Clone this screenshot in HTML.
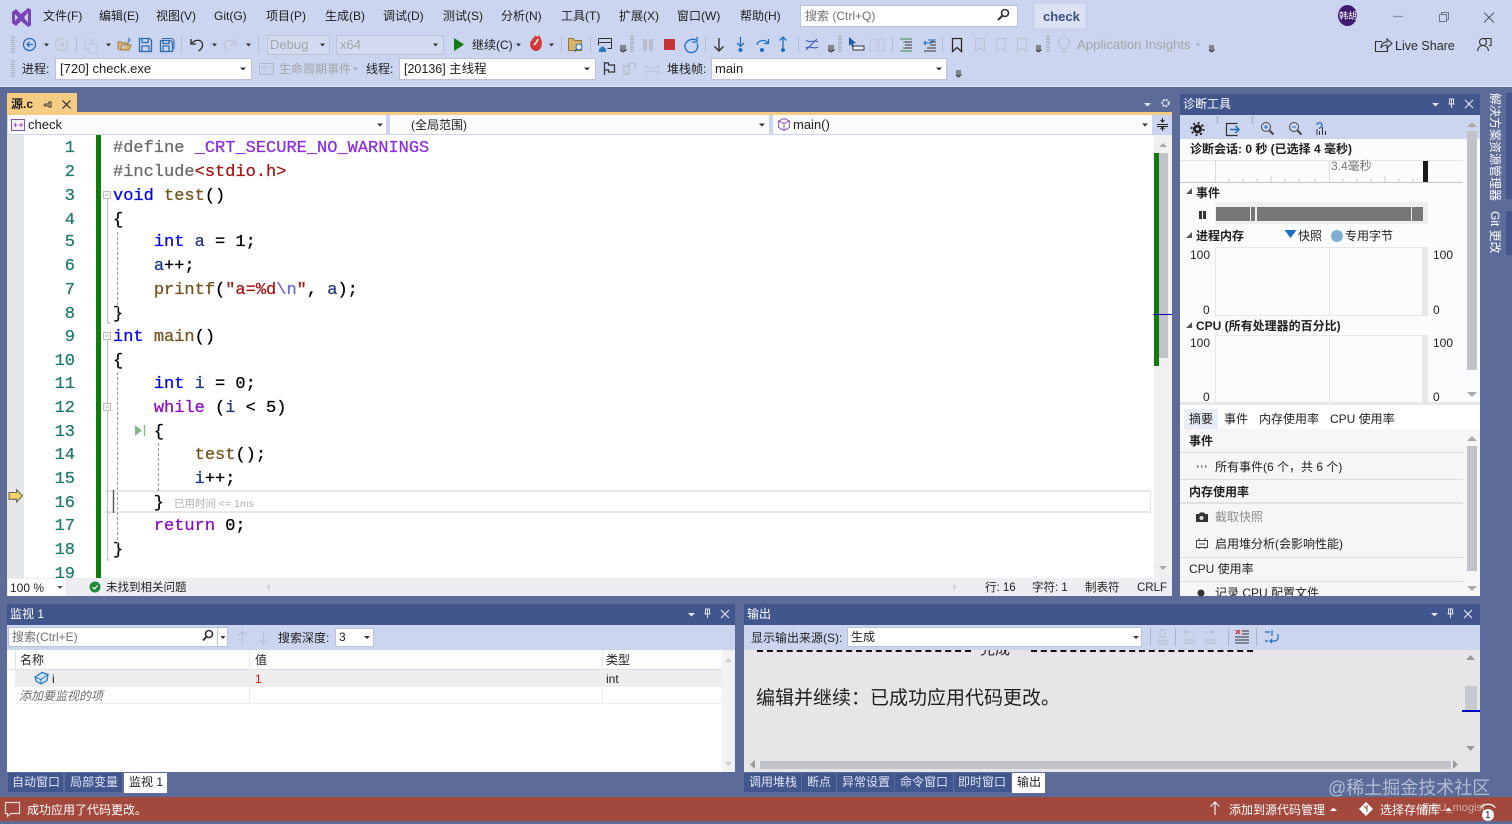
<!DOCTYPE html>
<html lang="zh"><head><meta charset="utf-8"><title>check</title>
<style>
html,body{margin:0;padding:0}
body{width:1512px;height:821px;overflow:hidden;position:relative;background:#5d6b99;font-family:"Liberation Sans","Noto Sans CJK SC",sans-serif;font-size:12px;color:#1e1e1e}
.b{position:absolute}
.t{position:absolute;white-space:nowrap;line-height:16px;height:16px}
.w{color:#fff}
.g{color:#a2a4a5}
.bd{font-weight:bold}
.c{position:absolute;white-space:pre;font-family:"Liberation Mono","DejaVu Sans Mono",monospace;font-size:17px;line-height:24px;height:24px;color:#000;-webkit-text-stroke:.25px currentColor}
.n{color:#1f7a6b;width:28px;text-align:right;left:47px}
.k{color:#0000ff}.p{color:#8f08c4}.f{color:#74531f}.v{color:#1f377f}.s{color:#a31515}.m{color:#8a2be2}.h{color:#6a6a6a}.e{color:#6a6acb}
.cb{position:absolute;background:#fff;border:1px solid #bcc3d8;box-sizing:border-box}
svg{position:absolute;left:0;top:0;z-index:5;pointer-events:none}
</style></head><body>

<!-- top chrome -->
<div class="b" style="left:0;top:0;width:1512px;height:86px;background:#ccd5f0"></div>
<div class="b" style="left:0;top:86px;width:1512px;height:1px;background:#dfe5f5"></div>
<div class="t" style="left:43px;top:8px">文件(F)</div>
<div class="t" style="left:99px;top:8px">编辑(E)</div>
<div class="t" style="left:156px;top:8px">视图(V)</div>
<div class="t" style="left:214px;top:8px">Git(G)</div>
<div class="t" style="left:266px;top:8px">项目(P)</div>
<div class="t" style="left:325px;top:8px">生成(B)</div>
<div class="t" style="left:383px;top:8px">调试(D)</div>
<div class="t" style="left:443px;top:8px">测试(S)</div>
<div class="t" style="left:501px;top:8px">分析(N)</div>
<div class="t" style="left:561px;top:8px">工具(T)</div>
<div class="t" style="left:619px;top:8px">扩展(X)</div>
<div class="t" style="left:677px;top:8px">窗口(W)</div>
<div class="t" style="left:740px;top:8px">帮助(H)</div>
<div class="cb" style="left:800px;top:5px;width:218px;height:22px"></div>
<div class="t" style="left:805px;top:8px;color:#717171">搜索 (Ctrl+Q)</div>
<div class="b" style="left:1035px;top:4px;width:50px;height:24px;background:#dbe2f5"></div>
<div class="t bd" style="left:1043px;top:9px;font-size:13px;color:#3b4f81">check</div>
<div class="b" style="left:1338px;top:5px;width:19px;height:21px;border-radius:50%;background:#3f1a6e"></div>
<div class="t w" style="left:1339px;top:8px;font-size:9px;width:18px;overflow:hidden">韩胡</div>

<div class="cb" style="left:267px;top:35px;width:63px;height:20px;background:#d3dbf1"></div>
<div class="t g" style="left:270px;top:37px;font-size:13px">Debug</div>
<div class="cb" style="left:336px;top:35px;width:108px;height:20px;background:#d3dbf1"></div>
<div class="t g" style="left:340px;top:37px;font-size:13px">x64</div>
<div class="t" style="left:472px;top:37px">继续(C)</div>
<div class="t g" style="left:1077px;top:37px;font-size:13.2px">Application Insights</div>
<div class="t" style="left:1395px;top:38px;font-size:12.5px;color:#2a2a2a">Live Share</div>

<div class="t" style="left:22px;top:61px">进程:</div>
<div class="cb" style="left:55px;top:58px;width:197px;height:22px"></div>
<div class="t" style="left:60px;top:61px;font-size:13px">[720] check.exe</div>
<div class="t g" style="left:279px;top:61px">生命周期事件</div>
<div class="t" style="left:366px;top:61px">线程:</div>
<div class="cb" style="left:399px;top:58px;width:197px;height:22px"></div>
<div class="t" style="left:404px;top:61px;font-size:12.5px">[20136] 主线程</div>
<div class="t" style="left:667px;top:61px">堆栈帧:</div>
<div class="cb" style="left:711px;top:58px;width:236px;height:22px"></div>
<div class="t" style="left:715px;top:61px;font-size:13px">main</div>

<!-- document tab -->
<div class="b" style="left:7px;top:93px;width:70px;height:20px;background:#f5cc84"></div>
<div class="b" style="left:7px;top:112px;width:1165px;height:3px;background:#f5cc84"></div>
<div class="t bd" style="left:11px;top:96px">源.c</div>

<!-- nav bar -->
<div class="b" style="left:7px;top:115px;width:1165px;height:20px;background:#ccd5f0"></div>
<div class="b" style="left:8px;top:115px;width:378px;height:19px;background:#fcfcfd"></div>
<div class="b" style="left:390px;top:115px;width:379px;height:19px;background:#fcfcfd"></div>
<div class="b" style="left:773px;top:115px;width:379px;height:19px;background:#fcfcfd"></div>
<div class="t" style="left:28px;top:117px;font-size:13px">check</div>
<div class="t" style="left:411px;top:117px">(全局范围)</div>
<div class="t" style="left:793px;top:117px;font-size:13px">main()</div>

<!-- editor -->
<div class="b" style="left:7px;top:135px;width:1147px;height:443px;background:#fff;overflow:hidden">
<div class="b" style="left:0;top:0;width:17px;height:443px;background:#e6e7e8"></div>
<div class="b" style="left:89px;top:0;width:5px;height:443px;background:#107c10"></div>
<div class="b" style="left:98px;top:355px;width:1046px;height:23px;border:1px solid #e6e6e6;border-width:2px 1px 2px 0;box-sizing:border-box"></div>
</div>
<div class="c n" style="top:137px">1</div><div class="c n" style="top:161px">2</div><div class="c n" style="top:185px">3</div><div class="c n" style="top:209px">4</div><div class="c n" style="top:231px">5</div><div class="c n" style="top:255px">6</div><div class="c n" style="top:279px">7</div><div class="c n" style="top:303px">8</div><div class="c n" style="top:326px">9</div><div class="c n" style="top:350px">10</div><div class="c n" style="top:373px">11</div><div class="c n" style="top:397px">12</div><div class="c n" style="top:421px">13</div><div class="c n" style="top:444px">14</div><div class="c n" style="top:468px">15</div><div class="c n" style="top:492px">16</div><div class="c n" style="top:515px">17</div><div class="c n" style="top:539px">18</div><div class="b" style="left:0;top:563px;width:100px;height:15px;overflow:hidden"><div class="c n" style="top:0">19</div></div>

<div class="c" style="left:113px;top:137px"><span class="h">#define</span> <span class="m">_CRT_SECURE_NO_WARNINGS</span></div>
<div class="c" style="left:113px;top:161px"><span class="h">#include</span><span class="s">&lt;stdio.h&gt;</span></div>
<div class="c" style="left:113px;top:185px"><span class="k">void</span> <span class="f">test</span>()</div>
<div class="c" style="left:113px;top:209px">{</div>
<div class="c" style="left:113px;top:231px">    <span class="k">int</span> <span class="v">a</span> = 1;</div>
<div class="c" style="left:113px;top:255px">    <span class="v">a</span>++;</div>
<div class="c" style="left:113px;top:279px">    <span class="f">printf</span>(<span class="s">"a=%d</span><span class="e">\n</span><span class="s">"</span>, <span class="v">a</span>);</div>
<div class="c" style="left:113px;top:303px">}</div>
<div class="c" style="left:113px;top:326px"><span class="k">int</span> <span class="f">main</span>()</div>
<div class="c" style="left:113px;top:350px">{</div>
<div class="c" style="left:113px;top:373px">    <span class="k">int</span> <span class="v">i</span> = 0;</div>
<div class="c" style="left:113px;top:397px">    <span class="p">while</span> (<span class="v">i</span> &lt; 5)</div>
<div class="c" style="left:113px;top:421px">    {</div>
<div class="c" style="left:113px;top:444px">        <span class="f">test</span>();</div>
<div class="c" style="left:113px;top:468px">        <span class="v">i</span>++;</div>
<div class="c" style="left:113px;top:492px">    }</div>
<div class="t" style="left:174px;top:496px;font-size:10.5px;color:#b0b0b0">已用时间 &lt;= 1ms</div>
<div class="c" style="left:113px;top:515px">    <span class="p">return</span> 0;</div>
<div class="c" style="left:113px;top:539px">}</div>

<!-- editor scrollbar -->
<div class="b" style="left:1154px;top:135px;width:18px;height:443px;background:#f0f0f2"></div>
<div class="b" style="left:1159px;top:153px;width:9px;height:205px;background:#c2c3c9"></div>
<div class="b" style="left:1154px;top:153px;width:5px;height:213px;background:#107c10"></div>
<div class="b" style="left:1153px;top:314px;width:19px;height:1px;background:#0000c0;z-index:3"></div>

<!-- editor status -->
<div class="b" style="left:7px;top:578px;width:1165px;height:18px;background:#eeeef2"></div>
<div class="b" style="left:8px;top:579px;width:57px;height:17px;background:#fff"></div>
<div class="t" style="left:10px;top:580px">100 %</div>
<div class="t" style="left:106px;top:580px;font-size:11.5px">未找到相关问题</div>
<div class="t" style="left:985px;top:580px;font-size:11.5px">行: 16</div>
<div class="t" style="left:1032px;top:580px;font-size:11.5px">字符: 1</div>
<div class="t" style="left:1085px;top:580px;font-size:11.5px">制表符</div>
<div class="t" style="left:1137px;top:580px;font-size:11.5px">CRLF</div>

<!-- diagnostics -->
<div class="b" style="left:1180px;top:94px;width:300px;height:21px;background:#40568d"></div>
<div class="t w" style="left:1183px;top:96px">诊断工具</div>
<div class="b" style="left:1180px;top:115px;width:300px;height:24px;background:#ccd5f0"></div>
<div class="b" style="left:1180px;top:139px;width:300px;height:266px;background:#fbfcfd"></div>
<div class="t bd" style="left:1190px;top:141px;font-size:12px">诊断会话: 0 秒 (已选择 4 毫秒)</div>
<div class="b" style="left:1180px;top:160px;width:283px;height:1px;background:#e4e4e4"></div>
<div class="b" style="left:1180px;top:182px;width:283px;height:1px;background:#c8c8c8"></div>
<div class="b" style="left:1215px;top:161px;width:1px;height:21px;background:#ddd"></div>
<div class="b" style="left:1329px;top:161px;width:1px;height:21px;background:#ddd"></div>
<div class="b" style="left:1423px;top:161px;width:5px;height:21px;background:#1c1c1c"></div>
<div class="t" style="left:1331px;top:158px;color:#777">3.4毫秒</div>
<div class="t bd" style="left:1196px;top:185px">事件</div>
<div class="b" style="left:1215px;top:202px;width:213px;height:22px;background:#eee"></div>
<div class="b" style="left:1216px;top:207px;width:207px;height:14px;background:#777"></div>
<div class="b" style="left:1250px;top:207px;width:1px;height:14px;background:#eee"></div>
<div class="b" style="left:1255px;top:207px;width:2px;height:14px;background:#eee"></div>
<div class="b" style="left:1411px;top:207px;width:1px;height:14px;background:#eee"></div>
<div class="t bd" style="left:1196px;top:228px">进程内存</div>
<div class="t" style="left:1298px;top:228px">快照</div>
<div class="t" style="left:1345px;top:228px">专用字节</div>
<div class="b" style="left:1215px;top:247px;width:208px;height:69px;border:1px solid #e6e6e6;box-sizing:border-box;background:#fcfcfd"></div>
<div class="b" style="left:1329px;top:247px;width:1px;height:69px;background:#e2e2e2"></div>
<div class="b" style="left:1423px;top:247px;width:5px;height:69px;background:#e8e8e8"></div>
<div class="t" style="left:1190px;top:247px">100</div><div class="t" style="left:1433px;top:247px">100</div>
<div class="t" style="left:1203px;top:302px">0</div><div class="t" style="left:1433px;top:302px">0</div>
<div class="t bd" style="left:1196px;top:318px">CPU (所有处理器的百分比)</div>
<div class="b" style="left:1215px;top:335px;width:208px;height:68px;border:1px solid #e6e6e6;box-sizing:border-box;background:#fcfcfd"></div>
<div class="b" style="left:1329px;top:335px;width:1px;height:68px;background:#e2e2e2"></div>
<div class="b" style="left:1423px;top:335px;width:5px;height:68px;background:#e8e8e8"></div>
<div class="t" style="left:1190px;top:335px">100</div><div class="t" style="left:1433px;top:335px">100</div>
<div class="t" style="left:1203px;top:389px">0</div><div class="t" style="left:1433px;top:389px">0</div>
<div class="b" style="left:1180px;top:402px;width:300px;height:3px;background:#e8e8e8"></div>
<div class="b" style="left:1467px;top:131px;width:10px;height:239px;background:#c2c3c9"></div>

<div class="b" style="left:1180px;top:405px;width:300px;height:24px;background:#fff"></div>
<div class="b" style="left:1184px;top:409px;width:34px;height:20px;background:#e8edf8"></div>
<div class="t" style="left:1189px;top:411px">摘要</div><div class="t" style="left:1224px;top:411px">事件</div><div class="t" style="left:1259px;top:411px">内存使用率</div><div class="t" style="left:1330px;top:411px">CPU 使用率</div>
<div class="b" style="left:1180px;top:429px;width:300px;height:167px;background:#f6f6f6;overflow:hidden">
<div class="b" style="left:0;top:23px;width:283px;height:1px;background:#ddd"></div>
<div class="b" style="left:0;top:50px;width:283px;height:1px;background:#ddd"></div>
<div class="b" style="left:0;top:73px;width:283px;height:2px;background:#e2e2e2"></div>
<div class="b" style="left:0;top:128px;width:283px;height:1px;background:#ddd"></div>
<div class="b" style="left:0;top:152px;width:283px;height:1px;background:#ddd"></div>
<div class="t" style="left:35px;top:156px">记录 CPU 配置文件</div>
</div>
<div class="t bd" style="left:1189px;top:433px">事件</div>
<div class="t" style="left:1215px;top:459px">所有事件(6 个，共 6 个)</div>
<div class="t bd" style="left:1189px;top:484px">内存使用率</div>
<div class="t" style="left:1215px;top:509px;color:#8e8e8e">截取快照</div>
<div class="t" style="left:1215px;top:536px">启用堆分析(会影响性能)</div>
<div class="t" style="left:1189px;top:561px">CPU 使用率</div>
<div class="b" style="left:1467px;top:446px;width:10px;height:125px;background:#c2c3c9"></div>

<!-- right side tabs -->
<div class="b" style="left:1506px;top:93px;width:6px;height:106px;background:#40568d"></div>
<div class="b" style="left:1506px;top:211px;width:6px;height:44px;background:#40568d"></div>
<div class="b w" style="left:1488px;top:93px;writing-mode:vertical-rl;text-orientation:sideways;white-space:nowrap;line-height:14px;font-size:12px">解决方案资源管理器</div>
<div class="b w" style="left:1488px;top:211px;writing-mode:vertical-rl;text-orientation:sideways;white-space:nowrap;line-height:14px;font-size:12px">Git 更改</div>

<!-- watch panel -->
<div class="b" style="left:7px;top:604px;width:728px;height:21px;background:#40568d"></div>
<div class="t w" style="left:10px;top:606px">监视 1</div>
<div class="b" style="left:7px;top:625px;width:728px;height:25px;background:#ccd5f0"></div>
<div class="cb" style="left:8px;top:627px;width:210px;height:20px"></div>
<div class="cb" style="left:217px;top:627px;width:11px;height:20px"></div>
<div class="t" style="left:12px;top:629px;color:#717171">搜索(Ctrl+E)</div>
<div class="t" style="left:278px;top:630px">搜索深度:</div>
<div class="cb" style="left:335px;top:628px;width:39px;height:19px"></div>
<div class="t" style="left:339px;top:629px">3</div>
<div class="b" style="left:7px;top:650px;width:728px;height:122px;background:#fff"></div>
<div class="b" style="left:7px;top:650px;width:715px;height:19px;background:#fdfdfe;border-bottom:1px solid #dcdfeb;box-sizing:content-box"></div>
<div class="b" style="left:15px;top:650px;width:1px;height:19px;background:#dcdfeb"></div>
<div class="b" style="left:249px;top:650px;width:1px;height:53px;background:#e8e8ee"></div>
<div class="b" style="left:602px;top:650px;width:1px;height:53px;background:#e8e8ee"></div>
<div class="t" style="left:20px;top:652px">名称</div><div class="t" style="left:255px;top:652px">值</div><div class="t" style="left:606px;top:652px">类型</div>
<div class="b" style="left:15px;top:670px;width:707px;height:17px;background:#eeeeee"></div>
<div class="b" style="left:15px;top:703px;width:707px;height:1px;background:#eee"></div>
<div class="t" style="left:52px;top:671px">i</div>
<div class="t" style="left:255px;top:671px;color:#e51400">1</div>
<div class="t" style="left:606px;top:671px">int</div>
<div class="t" style="left:19px;top:688px;font-style:italic;color:#6d6d6d">添加要监视的项</div>
<div class="b" style="left:722px;top:650px;width:13px;height:122px;background:#f3f3f4"></div>
<div class="b" style="left:8px;top:773px;width:55px;height:19px;background:#40568d"></div>
<div class="b" style="left:65px;top:773px;width:57px;height:19px;background:#40568d"></div>
<div class="b" style="left:124px;top:773px;width:43px;height:20px;background:#fff"></div>
<div class="t" style="left:12px;top:774px;color:#dfe4f3">自动窗口</div>
<div class="t" style="left:70px;top:774px;color:#dfe4f3">局部变量</div>
<div class="t" style="left:129px;top:774px">监视 1</div>

<!-- output panel -->
<div class="b" style="left:744px;top:604px;width:736px;height:21px;background:#40568d"></div>
<div class="t w" style="left:747px;top:606px">输出</div>
<div class="b" style="left:744px;top:625px;width:736px;height:25px;background:#ccd5f0"></div>
<div class="t" style="left:751px;top:630px">显示输出来源(S):</div>
<div class="cb" style="left:847px;top:627px;width:295px;height:20px"></div>
<div class="t" style="left:851px;top:629px">生成</div>
<div class="b" style="left:744px;top:650px;width:736px;height:122px;background:#e6e6e6;overflow:hidden">
<div class="t" style="left:236px;top:-8px;font-size:15px;line-height:16px">完成</div>
<div class="b" style="left:13px;top:0;width:214px;height:0;border-top:2px dashed #111"></div>
<div class="b" style="left:287px;top:0;width:222px;height:0;border-top:2px dashed #111"></div>
<div class="b" style="left:16px;top:111px;width:691px;height:8px;background:#c2c3c9"></div>
<div class="b" style="left:721px;top:36px;width:12px;height:24px;background:#c8c9ce"></div>
<div class="b" style="left:718px;top:60px;width:18px;height:2px;background:#0000c0"></div>
</div>
<div class="t" style="left:756px;top:688px;font-size:19px;line-height:22px;height:22px">编辑并继续：已成功应用代码更改。</div>
<div class="b" style="left:744px;top:773px;width:57px;height:19px;background:#40568d"></div>
<div class="b" style="left:802px;top:773px;width:34px;height:19px;background:#40568d"></div>
<div class="b" style="left:837px;top:773px;width:57px;height:19px;background:#40568d"></div>
<div class="b" style="left:895px;top:773px;width:58px;height:19px;background:#40568d"></div>
<div class="b" style="left:954px;top:773px;width:57px;height:19px;background:#40568d"></div>
<div class="b" style="left:1012px;top:773px;width:33px;height:20px;background:#fff"></div>
<div class="t" style="left:749px;top:774px;color:#dfe4f3">调用堆栈</div>
<div class="t" style="left:807px;top:774px;color:#dfe4f3">断点</div>
<div class="t" style="left:842px;top:774px;color:#dfe4f3">异常设置</div>
<div class="t" style="left:900px;top:774px;color:#dfe4f3">命令窗口</div>
<div class="t" style="left:958px;top:774px;color:#dfe4f3">即时窗口</div>
<div class="t" style="left:1017px;top:774px">输出</div>

<!-- status bar -->
<div class="b" style="left:0;top:797px;width:1512px;height:24px;background:#a2483c"></div>
<div class="t w" style="left:27px;top:802px">成功应用了代码更改。</div>
<div class="t w" style="left:1229px;top:802px">添加到源代码管理</div>
<div class="t w" style="left:1380px;top:802px">选择存储库</div>
<div class="t" style="left:1420px;top:800px;font-size:11px;color:rgba(255,255,255,.55);z-index:6">@PU_mogist</div>
<div class="t" style="left:1328px;top:778px;font-size:18px;line-height:20px;height:20px;color:rgba(235,238,248,.6);z-index:6">@稀土掘金技术社区</div>

<svg width="1512" height="821" viewBox="0 0 1512 821" fill="none">
<!-- VS logo -->
<path d="M12 12l4-3 5 5 7-6 3 1.5v16L28 27l-7-6-5 5-4-3v-11z" fill="#7a44b8"/>
<path d="M15 14v7l3-3.500zM28 12.500l-4 5 4 5z" fill="#ccd5f0"/>
<!-- toolbar grips -->
<g stroke="#aab0c4" stroke-dasharray="1 1" stroke-width="4"><path d="M13 36v17M13 60v17M632 35v18M840 35v18M1048 35v18"/></g>
<!-- back/forward -->
<circle cx="29.500" cy="44.500" r="6" stroke="#2b6cb0" stroke-width="1.300"/><path d="M33 44.500h-6M29.500 42l-2.500 2.500 2.500 2.500" stroke="#2b6cb0" stroke-width="1.300"/>
<circle cx="61.500" cy="44.500" r="6" stroke="#bfc4d4" stroke-width="1.300"/><path d="M58 44.500h6M61.500 42l2.500 2.500-2.500 2.500" stroke="#bfc4d4" stroke-width="1.300"/>
<path d="M44 43.500h5l-2.500 3zM106 43.500h5l-2.500 3zM212 43.500h5l-2.500 3zM246 43.500h5l-2.500 3zM516 43.500h5l-2.500 3zM549 43.500h5l-2.500 3z" fill="#333"/>
<path d="M320 43.500h5l-2.500 3zM433 43.500h5l-2.500 3zM240 67.500h6l-3 3zM584 67.500h6l-3 3zM936 67.500h6l-3 3zM377 123.500h6l-3 3zM759 123.500h6l-3 3zM1142 123.500h6l-3 3z" fill="#333"/>
<path d="M353 67.500h5l-2.500 3zM1196 43.500h4l-2 3z" fill="#a0a4b4"/>
<!-- separators -->
<g stroke="#b5bdd4"><path d="M76.500 36v17M181.500 36v17M258.500 36v17M561.500 36v17M590.500 36v17M705.500 36v17M798.500 36v17M892.500 36v17M942.500 36v17"/></g>
<!-- new project disabled -->
<path d="M85 40h8v4h4v9h-8v-4h-4zM89 44h8" stroke="#bcc2d4"/>
<!-- open folder -->
<path d="M118 50v-8h4l1 1h5v2h-6l-2 5h9l2-5h-3" fill="#dcb67a" stroke="#9c7a3c"/><path d="M128 38l2 2-2 2" stroke="#1b6ec2"/>
<!-- saves -->
<path d="M139.500 38.500h10l2 2v11h-12zM142 38.500v4h6v-4M142 51v-5h7v5" stroke="#2b6cb0" stroke-width="1.300"/>
<path d="M160.500 40.500h10l2 2v9h-12zM163 40.500v3h6v-3M163 51v-5h6v5" stroke="#2b6cb0" stroke-width="1.300"/><path d="M162 38.500h10l2 2v9" stroke="#2b6cb0"/>
<!-- undo/redo -->
<path d="M191 39v5h5M191.500 44c3-5 10-5 11 0 .6 3-2 6-4 7" stroke="#2a2a2a" stroke-width="1.300"/>
<path d="M236 39v5h-5M235.500 44c-3-5-10-5-11 0-.6 3 2 6 4 7" stroke="#c0c5d6" stroke-width="1.300"/>
<!-- play -->
<path d="M454 38l10 6.500-10 6.500z" fill="#107c10"/>
<!-- hot reload -->
<path d="M530 44c0-4 4-5 5-9 0 2 3 2 5 0-1 2 2 4 2 8 0 5-3 8-6 8s-6-3-6-7z" fill="#d13a3a"/><path d="M534 45c2-2 3-3 4-6" stroke="#fff" stroke-width="1.500"/>
<!-- folder search -->
<path d="M568.500 38.500h5l1 2h7v10h-13z" fill="#d9b36c" stroke="#97783c"/><circle cx="579" cy="47" r="3" fill="#e7edf8" stroke="#2b6cb0"/><path d="M577 49l-2.500 2.500" stroke="#2b6cb0" stroke-width="1.300"/>
<!-- window home -->
<path d="M598.500 38.500h13v10h-4M598.500 42.500h13M598.500 38.500v7" stroke="#333"/><path d="M599 49l3.500-3 3.500 3v3h-7z" fill="#2b7cc4"/>
<path d="M620 46h6M620 48h6M620 50h6l-3 2-3-2" stroke="#333" stroke-width="1"/>
<!-- pause stop restart -->
<path d="M643 39h4v12h-4zM649 39h4v12h-4z" fill="#b9bfd0"/>
<rect x="664" y="39" width="11" height="11" fill="#c4343a"/>
<path d="M696 41c-5-2-10 1-11 5-.7 4 2.500 8 7 7.500s7-5 5-9M697 38v5h-5" stroke="#1b6ec2" stroke-width="1.300" transform="translate(0,-1)"/>
<!-- step icons -->
<path d="M719 38v13M714.500 46.500l4.500 4.500 4.500-4.500" stroke="#2a2a2a" stroke-width="1.300"/>
<path d="M740.500 37v9M737 43l3.500 3.500 3.500-3.500" stroke="#1b6ec2" stroke-width="1.300"/><circle cx="740.500" cy="50" r="2" fill="#1b6ec2"/>
<path d="M757 45c1-5 8-6 11-2M768.500 39v4.500H764" stroke="#1b6ec2" stroke-width="1.300"/><circle cx="762" cy="50" r="2" fill="#1b6ec2"/>
<path d="M783 48V37M779.500 40.500l3.500-3.500 3.500 3.500" stroke="#1b6ec2" stroke-width="1.300"/><circle cx="783" cy="50" r="2" fill="#1b6ec2"/>
<!-- hex icon -->
<path d="M806 50l11-11M806 40c4 4 8-1 12 2M806 48c4-3 8 2 12-1" stroke="#4a62b0" stroke-width="1.200"/>
<path d="M828 46h6M828 48h6M828 50h6l-3 2-3-2" stroke="#333"/>
<path d="M849 37l7 6-3 .5 1 3-2 .5-1-3-2 2z" fill="#1b5fa8"/><rect x="853" y="46" width="11" height="4" fill="#eef" stroke="#333"/>
<path d="M870 40h7v11h-7zM879 39h5v12h-5z" stroke="#bfc5d6"/>
<!-- indent/comment -->
<path d="M900 39h12M903 42h9M906 45h6M903 48h9M900 51h12" stroke="#3b8a3e" /><path d="M905 42h7M905 45h7M905 48h7" stroke="#333"/>
<path d="M928 40h7v-1M926 41l-2 2 2 2M924 43h6c3 0 3-3 3-3" stroke="#1b6ec2"/><path d="M930 45h6M927 48h9M924 51h12M930 42h6" stroke="#333"/>
<!-- bookmarks -->
<path d="M952.500 38.500h9v13l-4.500-4-4.500 4z" stroke="#2a2a2a" stroke-width="1.300"/>
<path d="M975.500 38.500h9v13l-4.500-4-4.500 4zM996.500 38.500h9v13l-4.500-4-4.500 4zM1017.500 38.500h9v13l-4.500-4-4.500 4z" stroke="#bcc2d4" stroke-width="1.200"/>
<path d="M1036 46h5M1036 48h5M1036 50h5l-2.500 2-2.500-2M1209 46h5M1209 48h5M1209 50h5l-2.500 2-2.500-2M956 71h5M956 73h5M956 75h5l-2.500 2-2.500-2" stroke="#333"/>
<circle cx="1064" cy="43" r="5.500" stroke="#b8bed0"/><path d="M1062 49v3h4v-3" stroke="#b8bed0"/>
<!-- live share -->
<path d="M1382 41.500h-6.500v10h12V47M1381 48c0-4 2-6 6-6v-3l5 4.500-5 4.500v-3c-3 0-5 1-6 3z" stroke="#333" stroke-width="1.100"/>
<circle cx="1483" cy="42" r="3.500" stroke="#333" stroke-width="1.100"/><path d="M1477.500 51c.5-4 3-5.500 5.500-5.500s5 1.500 5.500 5.500M1482 38.500h9v7h-2" stroke="#333" stroke-width="1.100"/>
<!-- search glass -->
<circle cx="1005" cy="13" r="3.500" stroke="#333" stroke-width="1.600"/><path d="M1002.500 15.500L998 20" stroke="#333" stroke-width="2"/>
<!-- window controls -->
<path d="M1393 16.500h10" stroke="#8d93a7" stroke-width="1.300"/>
<path d="M1439.500 14.500h7v7h-7zM1441.500 14.500v-2h7v7h-2" stroke="#6f7488"/>
<path d="M1484 12.500l10 10M1494 12.500l-10 10" stroke="#555a6c" stroke-width="1.100"/>
<!-- lifecycle icon -->
<path d="M259.500 63.500h14v11h-14zM259.500 67h14M264 67v7" stroke="#b5bacb"/>
<!-- frame icons -->
<path d="M604.500 62v13M604.500 63h4v2h6v7h-6v-2h-4" stroke="#333" stroke-width="1.200"/>
<path d="M624 74v-8h5v8zM629 68v-5h6v6" stroke="#b8bed0" stroke-width="1.500"/>
<path d="M646 66c3 3 8 3 13 0l0 7c-5-3-10-3-13 0z" stroke="#bcc2d4"/>
<!-- tab pin & close -->
<path d="M45 104h4v-2l2 0v5h-2v-1h-4zM45 105h-1.500" stroke="#333"/>
<path d="M62.500 100.500l8 8M70.500 100.500l-8 8" stroke="#222" stroke-width="1.100"/>
<path d="M1144 103h7l-3.500 3.500z" fill="#e0e5f3"/>
<circle cx="1165.500" cy="103" r="3.200" stroke="#dfe4f3" stroke-width="2" stroke-dasharray="2 1"/>
<!-- nav icons -->
<rect x="11.500" y="119.500" width="13" height="11" fill="#f4eef8" stroke="#7a5a9a"/><path d="M14 125h3M15.500 123v4M19 125h4M21 123v4" stroke="#a050c0"/>
<path d="M784 118.500l5.500 2.500v6.500l-5.500 3-5.500-3V121zM778.500 121l5.500 2.500 5.500-2.500M784 123.500v7" stroke="#8a5cc0"/>
<path d="M1157 124.500h11M1162.500 118v4M1160.500 120l2 2 2-2M1162.500 131v-4M1160.500 129l2-2 2 2M1157 126.500h11" stroke="#222"/>
<!-- editor margin -->
<path d="M1159 147l4-4 4 4zM1159 566l4 4 4-4z" fill="#a9a9a9"/>
<path d="M9 493.500h8v-3l6 6.500-6 6.500v-3H9z" fill="#f3d36c" stroke="#555" transform="translate(0,0) scale(.95) translate(.5,25)"/>
<!-- fold guides -->
<g stroke="#bdbdbd"><rect x="103.500" y="191.500" width="7" height="7" fill="#f6f6f6"/><path d="M105 195h4"/><rect x="103.500" y="332.500" width="7" height="7" fill="#f6f6f6"/><path d="M105 336h4"/><rect x="103.500" y="403.500" width="7" height="7" fill="#f6f6f6"/><path d="M105 407h4"/>
<path d="M107.500 199v124h3M107.500 340v63M107.500 411v102h3M107.500 513v47h3"/></g>
<g stroke="#999" stroke-dasharray="3 2"><path d="M117.500 232v82M117.500 372v180M158.500 443v50"/></g>
<path d="M113.500 490v23" stroke="#555" stroke-width="1.400"/>
<path d="M135 425l7 5.500-7 5.500z" fill="#7fb98a"/><path d="M144.500 425v11" stroke="#7fb98a" stroke-width="1.300"/>
<!-- status -->
<circle cx="95" cy="587" r="5.500" fill="#1f8a3a"/><path d="M92.500 587l2 2 3-3.500" stroke="#fff" stroke-width="1.200"/>
<path d="M57 586h6l-3 3z" fill="#333" opacity=".8"/>
<path d="M270 583l-4 4 4 4zM953 583l4 4-4 4z" fill="#d4d4d8"/>
<!-- panel header controls -->
<g id="hdr">
<path d="M1432 103h7l-3.500 3.500zM688 613h7l-3.500 3.500zM1431 613h7l-3.500 3.500z" fill="#dfe4f3"/>
<path d="M1451.500 99v8M1449.500 99h4v5h-4zM1448.500 104h6M1451.500 104v4M707.500 609v8M705.500 609h4v5h-4zM704.500 614h6M707.500 614v4M1450.500 609v8M1448.500 609h4v5h-4zM1447.500 614h6M1450.500 614v4" stroke="#dfe4f3"/>
<path d="M1465 100l8 8M1473 100l-8 8M721 610l8 8M729 610l-8 8M1464 610l8 8M1472 610l-8 8" stroke="#dfe4f3" stroke-width="1.200"/>
</g>
<!-- diagnostics toolbar -->
<circle cx="1197.500" cy="129" r="3" stroke="#222" stroke-width="3"/><circle cx="1197.500" cy="129" r="6" stroke="#222" stroke-width="2" stroke-dasharray="2 2.700"/>
<path d="M1217.500 116v8M1252.500 116v8" stroke="#aab3cc" stroke-width="1.500"/>
<path d="M1237.500 123.500h-11v12h11" stroke="#333" stroke-width="1.200"/><path d="M1230 129.500h9M1235.500 126l3.500 3.500-3.500 3.500" stroke="#1b6ec2" stroke-width="1.500"/>
<circle cx="1266" cy="127" r="4.500" stroke="#444"/><path d="M1269.500 130.500l4 4" stroke="#444" stroke-width="2"/><path d="M1264 127h4M1266 125v4" stroke="#1b6ec2"/>
<circle cx="1294" cy="127" r="4.500" stroke="#444"/><path d="M1297.500 130.500l4 4" stroke="#444" stroke-width="2"/><path d="M1292 127h4" stroke="#1b6ec2"/>
<path d="M1317 125c0-3 5-3 5 0 0 2-2.500 2-2.500 4" stroke="#1b6ec2" stroke-width="1.300"/><path d="M1319.500 131v4M1322.500 127v8M1325.500 131v4M1317 129v6" stroke="#333"/>
<!-- diag arrows -->
<path d="M1467 127l5-5 5 5zM1467 392l5 5 5-5zM1467 441l5-5 5 5zM1467 586l5 5 5-5z" fill="#aaa"/>
<!-- triangle collapse -->
<path d="M1192 188v6h-6zM1192 232v6h-6zM1192 322v6h-6z" fill="#555"/>
<!-- ruler ticks -->
<g stroke="#ccc"><path d="M1229 179v3M1243 179v3M1257 179v3M1271 176v6M1285 179v3M1299 179v3M1315 179v3M1343 179v3M1357 179v3M1371 179v3M1385 176v6M1399 179v3M1413 179v3"/></g>
<path d="M1199 211h3v8h-3zM1203 211h3v8h-3z" fill="#333"/>
<path d="M1284.500 230h12l-6 8z" fill="#1b6ec2"/>
<circle cx="1337" cy="236" r="6" fill="#7fb0d0"/>
<!-- summary icons -->
<path d="M1197 466.500h2M1201 466.500h2M1205 466.500h2" stroke="#777" stroke-width="2.500" stroke-dasharray="1 .6"/>
<path d="M1196 514h3l1-1.500h4l1 1.500h3v8h-12z" fill="#333"/><circle cx="1201.500" cy="518" r="2" fill="#ddd"/>
<path d="M1196.500 540.500h11v7h-11zM1199 538v3M1205 538v3M1199 547v2M1205 547v2M1199 544h6" stroke="#444"/>
<circle cx="1201" cy="593" r="3.500" fill="#333"/>
<!-- watch toolbar -->
<circle cx="209" cy="634" r="3.500" stroke="#333" stroke-width="1.600"/><path d="M206.500 636.500l-3.500 4" stroke="#333" stroke-width="2"/>
<path d="M220.500 636h5l-2.500 3zM364 636h6l-3 3z" fill="#333"/>
<path d="M242.500 644v-13M238 635.500l4.500-4.500 4.500 4.500M263.500 631v13M259 639.500l4.500 4.500 4.500-4.500" stroke="#b8bfd4" stroke-width="1.200"/>
<path d="M35 677l7-4.500 6 2-1 6-6 3.500-5-3z" fill="#cfe3f5" stroke="#2b7cc4" stroke-width="1.300"/><path d="M35 677l6 2.500 7-5M41 679.500v5" stroke="#2b7cc4"/>
<path d="M725 662l3.500-4 3.500 4zM725 762l3.500 4 3.500-4z" fill="#ccc"/>
<!-- output toolbar -->
<path d="M1136 635h6l-3 3z" fill="#333" transform="translate(-3,1)"/>
<path d="M1150.500 628v18M1175.500 628v18M1228.500 628v18M1256.500 628v18" stroke="#aab3cc"/>
<path d="M1157 641h11M1157 644h11M1160 631c1-2 5-2 5 1v5h-5z" stroke="#b0b6c8"/>
<path d="M1184 632h7M1187 630l-2 2 2 2M1184 640h11M1184 643h11M1206 632h8M1211 630l2 2-2 2M1205 640h11M1205 643h11" stroke="#b0b6c8"/>
<path d="M1236 630l4 4M1240 630l-4 4" stroke="#d13438" stroke-width="1.400"/><path d="M1242 631h7M1242 634h7M1235 637h14M1235 640h14M1235 643h14" stroke="#333"/>
<path d="M1272 630v6M1265 632h5M1265 641h3M1278 634v4c0 2-2 3-3 3h-5M1272 639l-2 2 2 2" stroke="#1b6ec2" stroke-width="1.200"/>
<path d="M1466 660l4.500-5 4.500 5zM1466 746l4.500 5 4.500-5zM755 760l-5 4.500 5 4.500zM1453 760l5 4.500-5 4.500z" fill="#999"/>
<!-- status bar icons -->
<path d="M5.500 802.500h14v11h-9l-3 3v-3h-2z" stroke="#e8d8d4" stroke-width="1.200"/>
<path d="M1215 815v-13M1210.500 806.500l4.500-4.500 4.500 4.500" stroke="#fff" stroke-width="1.100"/>
<path d="M1330 811l3.500-3.500 3.500 3.500zM1445 811l3.500-3.500 3.500 3.500z" fill="#fff"/>
<path d="M1366 802l7 7-7 7-7-7z" fill="#fff"/><path d="M1364 806l3 3v3M1367 805v4" stroke="#a2483c"/>
<circle cx="1488" cy="815" r="6" fill="#fff"/><path d="M1481 808c1-5 13-5 14 0" stroke="#fff" stroke-width="1.200"/>
</svg>
<div class="t" style="left:1485px;top:808px;font-size:10px;color:#222;z-index:7">1</div>
</body></html>
